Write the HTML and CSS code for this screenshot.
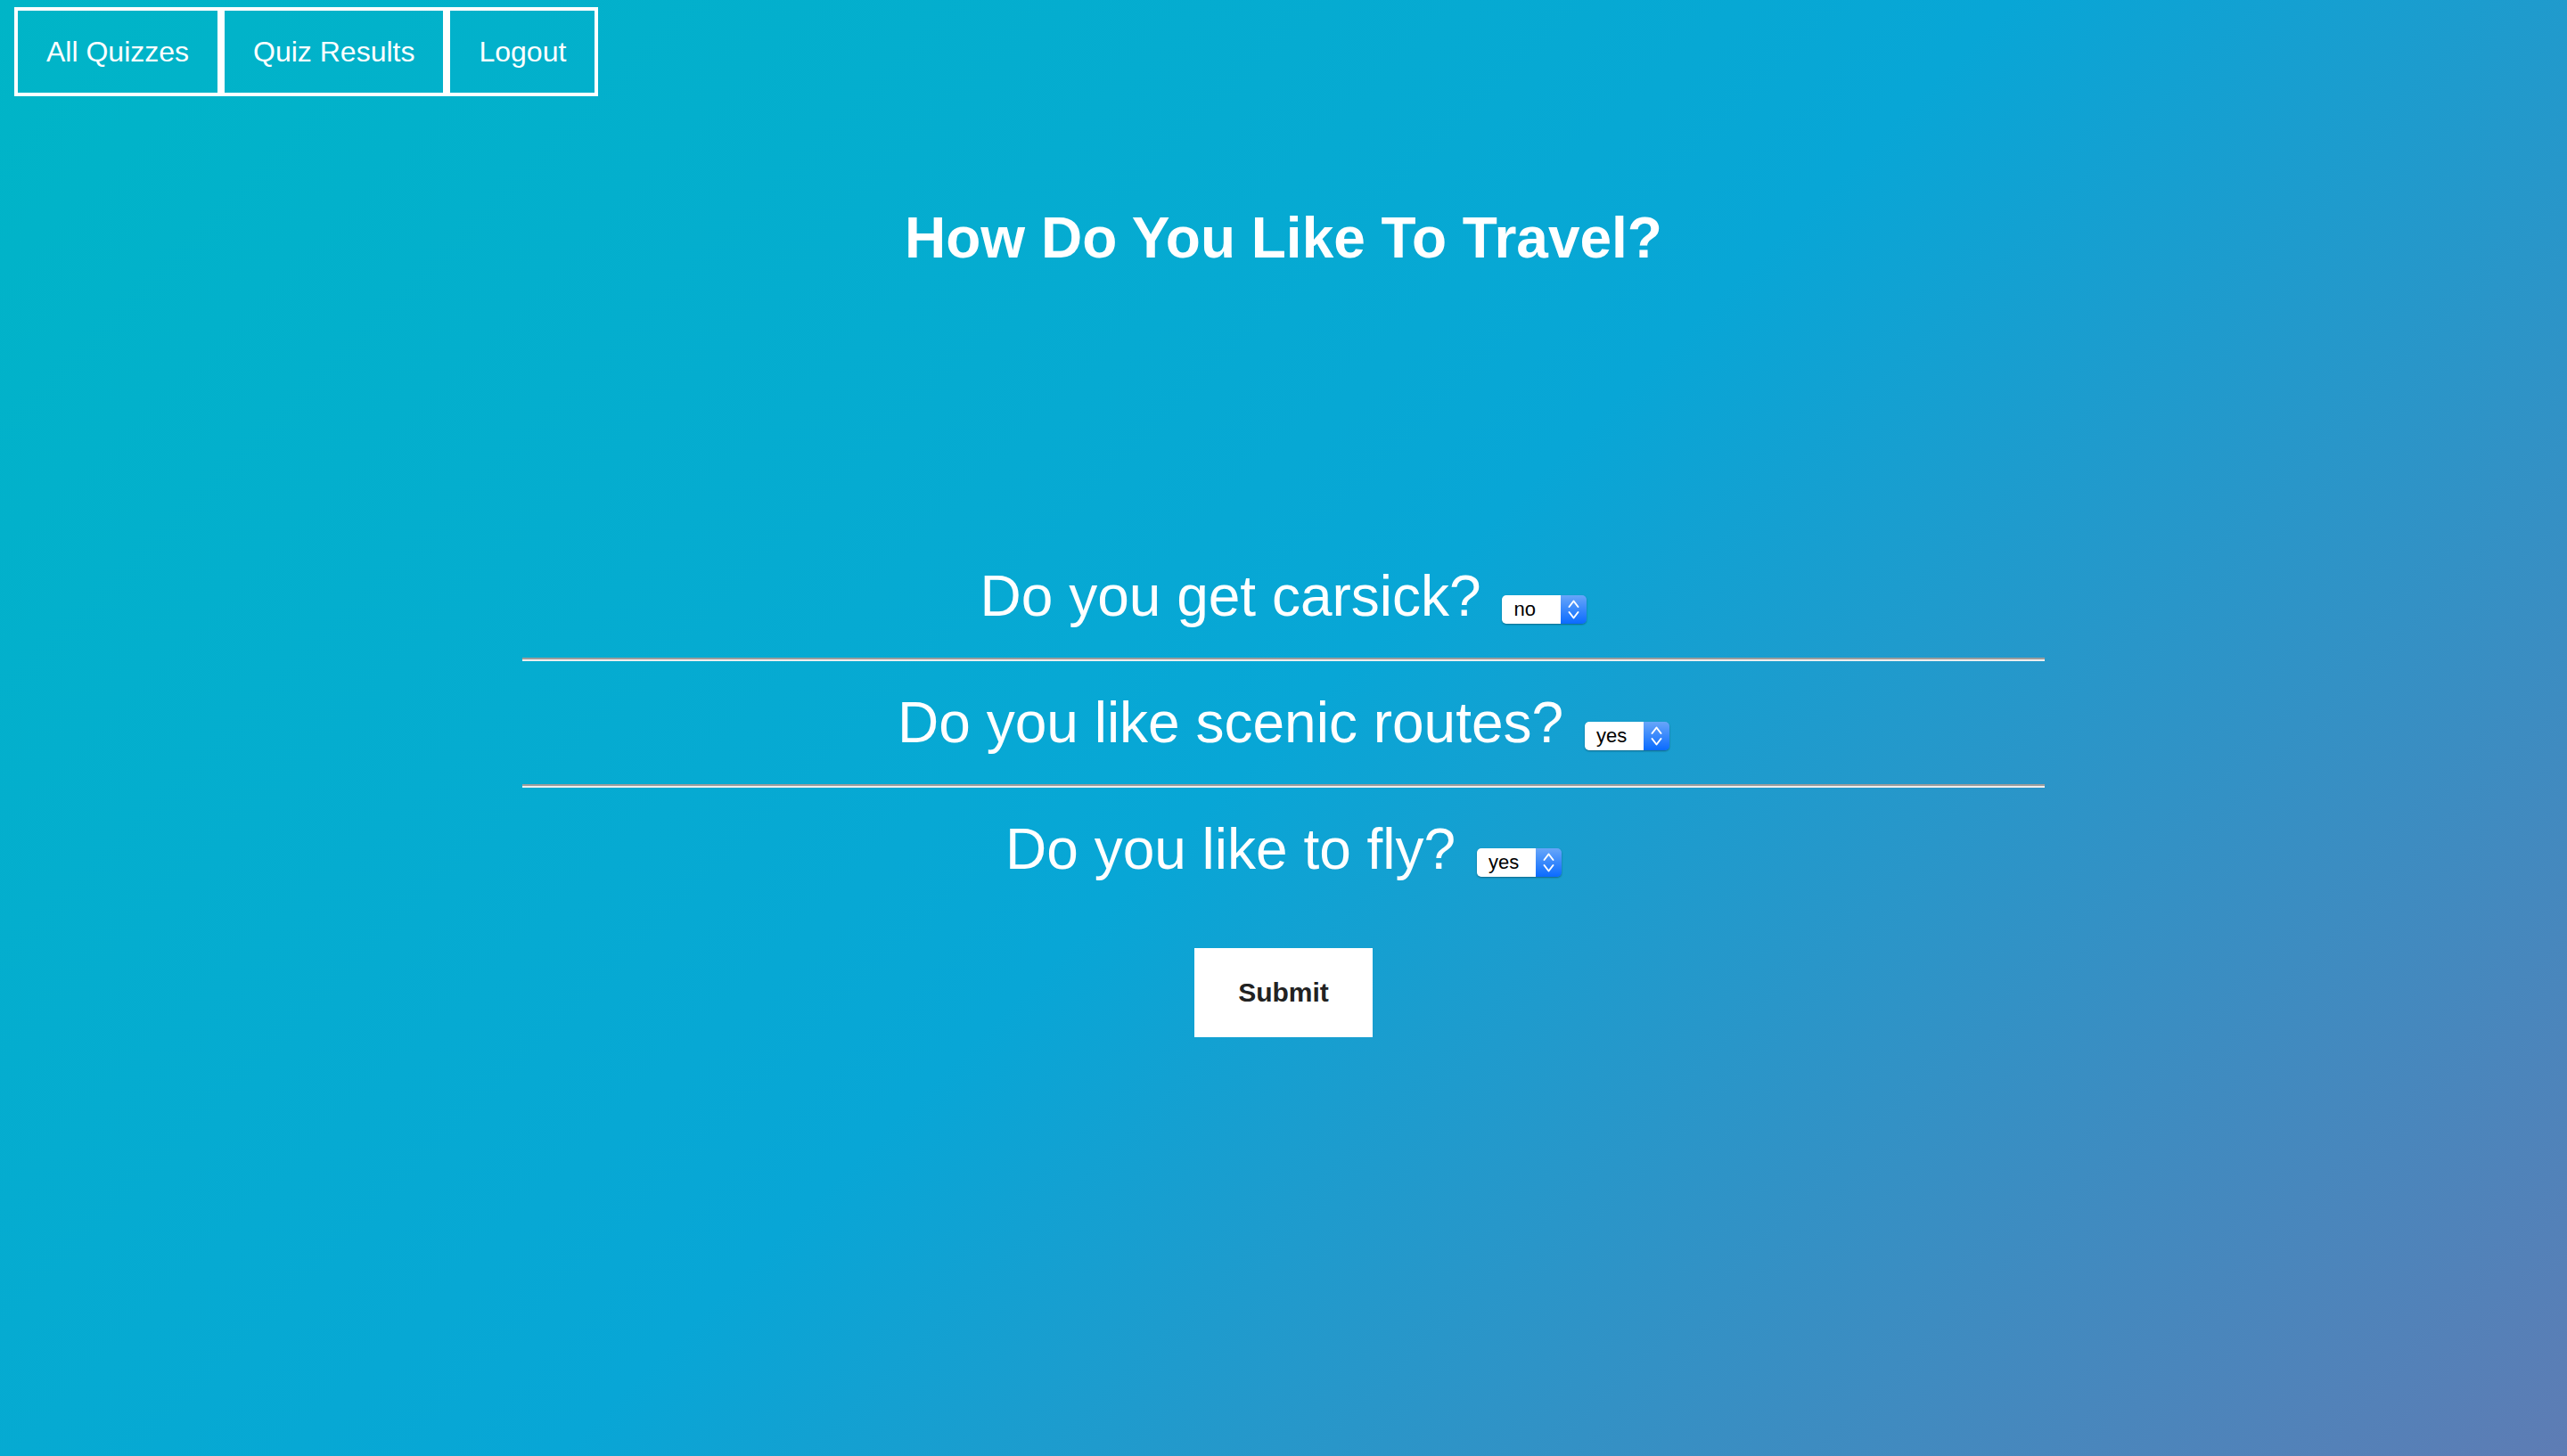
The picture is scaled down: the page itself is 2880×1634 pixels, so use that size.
FILE: index.html
```html
<!DOCTYPE html>
<html lang="en">
<head>
<meta charset="utf-8">
<title>How Do You Like To Travel?</title>
<link rel="stylesheet" href="styles.css">
</head>
<body>
<nav class="nav">
  <a class="nav-link" href="#">All Quizzes</a>
  <a class="nav-link" href="#">Quiz Results</a>
  <a class="nav-link" href="#">Logout</a>
</nav>
<main class="main">
  <h1 class="title">How Do You Like To Travel?</h1>
  <form class="quiz">
    <p class="question">Do you get carsick? <span class="select"><select class="select-input"><option selected>no</option><option>yes</option></select><span class="select-arrow"><svg width="29" height="32" viewBox="0 0 29 32"><path d="M9.5 13 L14.5 6.5 L19.5 13" fill="none" stroke="#fff" stroke-width="2" stroke-linecap="round" stroke-linejoin="round"/><path d="M9.5 19 L14.5 25.5 L19.5 19" fill="none" stroke="#fff" stroke-width="2" stroke-linecap="round" stroke-linejoin="round"/></svg></span></span></p>
    <hr class="divider">
    <p class="question">Do you like scenic routes? <span class="select"><select class="select-input"><option>no</option><option selected>yes</option></select><span class="select-arrow"><svg width="29" height="32" viewBox="0 0 29 32"><path d="M9.5 13 L14.5 6.5 L19.5 13" fill="none" stroke="#fff" stroke-width="2" stroke-linecap="round" stroke-linejoin="round"/><path d="M9.5 19 L14.5 25.5 L19.5 19" fill="none" stroke="#fff" stroke-width="2" stroke-linecap="round" stroke-linejoin="round"/></svg></span></span></p>
    <hr class="divider">
    <p class="question">Do you like to fly? <span class="select"><select class="select-input"><option>no</option><option selected>yes</option></select><span class="select-arrow"><svg width="29" height="32" viewBox="0 0 29 32"><path d="M9.5 13 L14.5 6.5 L19.5 13" fill="none" stroke="#fff" stroke-width="2" stroke-linecap="round" stroke-linejoin="round"/><path d="M9.5 19 L14.5 25.5 L19.5 19" fill="none" stroke="#fff" stroke-width="2" stroke-linecap="round" stroke-linejoin="round"/></svg></span></span></p>
    <div class="actions">
      <button class="submit" type="submit">Submit</button>
    </div>
  </form>
</main>
</body>
</html>
```
FILE: styles.css
```css
html {
  height: 100%;
}

body {
  margin: 0;
  min-height: 100%;
  font-family: "Liberation Sans", Arial, Helvetica, sans-serif;
  color: #fff;
  background: linear-gradient(135deg, #00b5c7 0%, #08a6d6 50%, #5e7cb4 100%);
}

.nav {
  display: flex;
  padding: 8px 16px 0;
}

.nav-link {
  display: block;
  border: 4px solid #fff;
  padding: 28px 32px;
  font-size: 32px;
  line-height: 36px;
  color: #fff;
  text-decoration: none;
}

.main {
  display: flex;
  flex-direction: column;
  align-items: center;
}

.title {
  margin: 122px 0 0;
  font-size: 64px;
  line-height: 74px;
  font-weight: bold;
  text-align: center;
}

.quiz {
  width: 1708px;
  margin-top: 328px;
}

.question {
  margin: 0;
  font-size: 64px;
  line-height: 74px;
  text-align: center;
}

.divider {
  height: 0;
  margin: 32px 0;
  border: none;
  border-top: 2px solid #9c9c9c;
  border-bottom: 2px solid #eeeeee;
}

.select {
  display: inline-flex;
  vertical-align: baseline;
  height: 32px;
  margin-left: 6px;
  border-radius: 5px;
  overflow: hidden;
  box-shadow: 0 1px 2px rgba(0, 0, 0, 0.35);
}

.select-input {
  -webkit-appearance: none;
  appearance: none;
  width: 66px;
  height: 32px;
  margin: 0;
  padding: 0 0 0 13px;
  border: none;
  background: #fff;
  color: #000;
  font-family: "Liberation Sans", Arial, Helvetica, sans-serif;
  font-size: 22px;
  outline: none;
}

.select-arrow {
  display: flex;
  width: 29px;
  height: 32px;
  background: linear-gradient(#68a6f9, #0a6bff);
}

.actions {
  display: flex;
  justify-content: center;
  margin-top: 74px;
}

.submit {
  width: 200px;
  height: 100px;
  padding: 0;
  border: none;
  background: #fff;
  color: #222;
  font-family: "Liberation Sans", Arial, Helvetica, sans-serif;
  font-size: 30px;
  font-weight: bold;
  line-height: 34px;
}
```
